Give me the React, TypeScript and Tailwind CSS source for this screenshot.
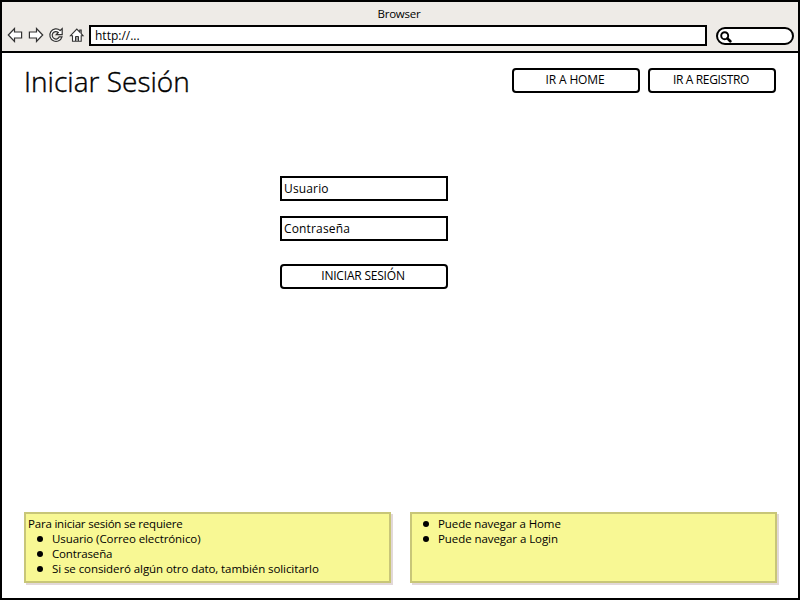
import type { ReactNode } from "react";

const iconStroke = { fill: "#fff", stroke: "#333", strokeWidth: 1.2, strokeLinejoin: "miter" as const };

function Toolbar() {
  return (
    <div className="flex h-[25px] items-start pl-[5px] pr-1">
      <svg className="mt-[2px] h-4 w-4 shrink-0" viewBox="0 0 16 16">
        <path {...iconStroke} d="M1.3 8 7.5 1.6V5H14.6V11H7.5V14.4Z" />
      </svg>
      <svg className="ml-[5px] mt-[2px] h-4 w-4 shrink-0" viewBox="0 0 16 16">
        <path {...iconStroke} d="M14.7 8 8.5 1.6V5H1.4V11H8.5V14.4Z" />
      </svg>
      <svg className="ml-[4px] mt-[2px] h-4 w-4 shrink-0" viewBox="0 0 16 16">
        <path
          {...iconStroke}
          strokeWidth={1.2}
          d="M12.2 3.5 14.2 1.6V7.6H8.3L10.3 5.5A3.7 3.7 0 1 0 11.3 9.8H14A6.2 6.2 0 1 1 12.2 3.5Z"
        />
      </svg>
      <svg className="ml-[5px] mt-[2px] h-4 w-4 shrink-0" viewBox="0 0 16 16">
        <path {...iconStroke} strokeWidth={1.1} d="M3.5 14.3V8.7H1.5L7.8 2 10.8 5.2V3H12.2V6.7L14 8.7H12.2V14.3Z" />
        <path fill="#999" stroke="#333" d="M6.5 14V9.5H9.5V14" />
      </svg>
      <div className="ml-[4px] flex h-[21px] w-[618px] items-center border-2 border-black bg-white pl-1 text-[12px] leading-4 tracking-[0px]">
        http://...
      </div>
      <div className="ml-[9px] mt-[2px] flex h-[18px] w-[78px] items-center rounded-full border-2 border-black bg-white pl-0.5 pt-px">
        <svg className="h-3 w-3" viewBox="0 0 12 12" fill="none" stroke="#000">
          <circle cx="4.7" cy="4.7" r="3.5" strokeWidth="1.9" />
          <path d="M7.4 7.4 10.3 10.3" strokeWidth="2.7" strokeLinecap="round" />
        </svg>
      </div>
    </div>
  );
}

function Button({ className, children }: { className: string; children: ReactNode }) {
  return (
    <button
      className={`h-[25px] rounded-[4px] border-2 border-black bg-white pb-0.5 pr-0.5 text-[12px] leading-[19px] ${className}`}
    >
      {children}
    </button>
  );
}

function Field({ label, className }: { label: string; className: string }) {
  return (
    <div className={`flex h-[25px] w-full items-center border-2 border-black bg-white pl-0.5 text-[12px] tracking-[0.15px] ${className}`}>
      {label}
    </div>
  );
}

function Note({ children }: { children: ReactNode }) {
  return (
    <div className="h-[71px] w-[367px] shrink-0 border-2 border-[#c8c678] bg-[#f8f894] pl-0.5 pt-[2px] text-[11.5px] leading-[15px] shadow-[2px_2px_0_#e2d8d8]">
      {children}
    </div>
  );
}

function Item({ className, children }: { className: string; children: ReactNode }) {
  return (
    <li className="flex items-center pl-[9px]">
      <span className="mr-[9px] h-1.5 w-1.5 rounded-full bg-black" />
      <span className={className}>{children}</span>
    </li>
  );
}

export default function App() {
  return (
    <div className="flex h-[600px] w-[800px] flex-col overflow-hidden border-2 border-black bg-white font-['Open_Sans','Noto_Sans',sans-serif] text-black">
      <header className="h-[51px] shrink-0 border-b-2 border-black bg-[#eeebe7]">
        <div className="flex h-[23px] items-center justify-center pr-0.5 text-[11.5px] tracking-[-0.25px]">Browser</div>
        <Toolbar />
      </header>
      <main className="flex grow flex-col pl-[22px] pr-[21px]">
        <div className="flex items-start justify-between pr-px pt-[15px]">
          <h1 className="-mt-[7px] h-[40px] whitespace-nowrap text-[28px] font-light leading-[40px] tracking-[0.02px] [-webkit-text-stroke:0.4px_#000]">
            Iniciar Sesión
          </h1>
          <div className="flex gap-2">
            <Button className="w-32 tracking-[-0.15px]">IR A HOME</Button>
            <Button className="w-32 tracking-[-0.35px]">IR A REGISTRO</Button>
          </div>
        </div>
        <form className="ml-[256px] mt-[75px] flex w-[168px] flex-col">
          <Field label="Usuario" className="" />
          <Field label="Contraseña" className="mt-[15px]" />
          <Button className="mt-[23px] w-full tracking-[-0.2px]">INICIAR SESIÓN</Button>
        </form>
        <div className="mb-[15px] mt-auto flex gap-[19px]">
          <Note>
            <p className="tracking-[-0.2px]">Para iniciar sesión se requiere</p>
            <ul>
              <Item className="tracking-[-0.09px]">Usuario (Correo electrónico)</Item>
              <Item className="tracking-[-0.15px]">Contraseña</Item>
              <Item className="tracking-[-0.08px]">Si se consideró algún otro dato, también solicitarlo</Item>
            </ul>
          </Note>
          <Note>
            <ul>
              <Item className="tracking-[-0.1px]">Puede navegar a Home</Item>
              <Item className="tracking-[-0.07px]">Puede navegar a Login</Item>
            </ul>
          </Note>
        </div>
      </main>
    </div>
  );
}
